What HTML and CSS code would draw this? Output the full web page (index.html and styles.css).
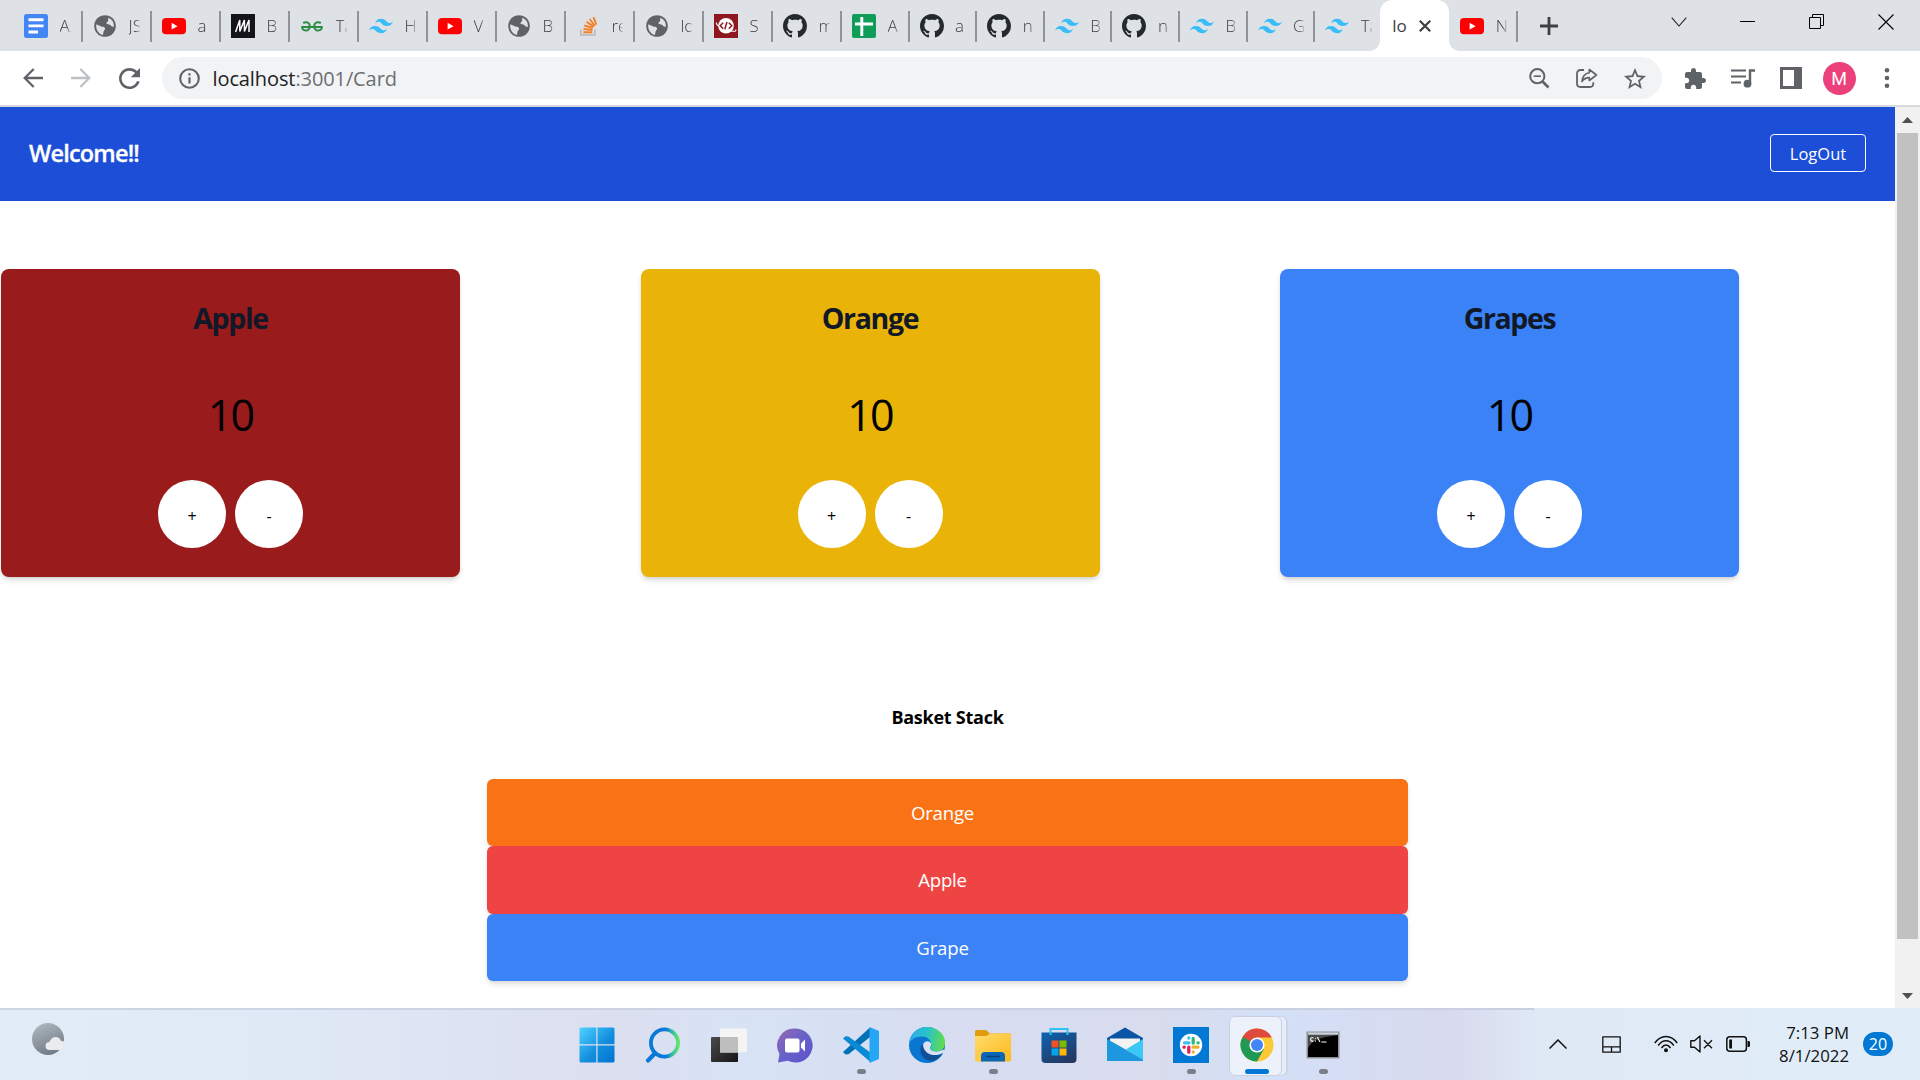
FILE: index.html
```html
<!DOCTYPE html>
<html lang="en">
<head>
<meta charset="utf-8">
<title>localhost:3001/Card</title>
<link rel="stylesheet" href="styles.css">
</head>
<body>
<svg width="0" height="0" class="defs">
  <defs>
    <linearGradient id="g-win" x1="0" y1="0" x2="1" y2="1"><stop offset="0" stop-color="#4fd2ff"/><stop offset=".55" stop-color="#1490df"/><stop offset="1" stop-color="#0072cf"/></linearGradient>
    <linearGradient id="g-search" x1="0" y1="0" x2="1" y2="0"><stop offset=".55" stop-color="#0a78d6"/><stop offset=".75" stop-color="#2fb5b0"/><stop offset="1" stop-color="#5ee66a"/></linearGradient>
    <linearGradient id="g-dark" x1="0" y1="0" x2="1" y2="1"><stop offset="0" stop-color="#4a4a48"/><stop offset="1" stop-color="#161616"/></linearGradient>
    <linearGradient id="g-chat" x1="0" y1="0" x2="1" y2="1"><stop offset="0" stop-color="#9a68ae"/><stop offset=".45" stop-color="#6a63c8"/><stop offset="1" stop-color="#5a50cc"/></linearGradient>
    <linearGradient id="g-edge" x1="0" y1=".3" x2="1" y2=".4"><stop offset="0" stop-color="#2fa9ea"/><stop offset=".5" stop-color="#29c3c8"/><stop offset="1" stop-color="#62dd4a"/></linearGradient>
    <linearGradient id="g-folder" x1="0" y1="0" x2="1" y2="1"><stop offset="0" stop-color="#ffdc70"/><stop offset="1" stop-color="#fcb917"/></linearGradient>
    <linearGradient id="g-store" x1="0" y1="0" x2=".6" y2="1"><stop offset="0" stop-color="#0b64b0"/><stop offset="1" stop-color="#243a66"/></linearGradient>
    <linearGradient id="g-moon" x1="0" y1="0" x2=".4" y2="1"><stop offset="0" stop-color="#b3bcc5"/><stop offset="1" stop-color="#747e88"/></linearGradient>
    <symbol id="docs" viewBox="0 0 24 24"><rect width="24" height="24" rx="2.5" fill="#4285f4"/><path d="M4.500 5.700h15M4.500 11.900h15M4.500 18h9.500" stroke="#fff" stroke-width="2.900"/></symbol>
    <symbol id="globe" viewBox="0 0 24 24"><circle cx="12" cy="12" r="10.800" fill="#5f6368"/><path d="M3.300 10.200l3.900 1.900c1.300.7 3.800.4 4.700 1.900.8 1.500-.8 2.300-1.300 3.400-.4 1-.3 2.400-.7 3.500C5.600 20 2.500 15.500 3.300 10.200zM15.200 3.700c4 1.500 6.200 5 5.600 9.300-1.300-.3-2.600-.5-3.200-1.700-.6-1-2.300-.7-3.500-1.200-1.300-.6-.5-1.900.4-2.400 1.200-.6.500-2.700.7-4z" fill="#dee1e6"/></symbol>
    <symbol id="youtube" viewBox="0 0 24 24"><rect y="4" width="24" height="16.300" rx="4" fill="#f00"/><path d="M9.600 8.800v6.700l6-3.350z" fill="#fff"/></symbol>
    <symbol id="medium" viewBox="0 0 24 24"><rect width="24" height="24" fill="#15141a"/><path d="M4.600 18L8.800 6v11.500L13.400 6v11.500L18 6v12" fill="none" stroke="#fff" stroke-width="1.500" stroke-linejoin="bevel"/></symbol>
    <symbol id="geeks" viewBox="0 0 24 24"><path d="M3.200 9.100C5.700 7.300 9.600 8 9.800 12.200c0 4-3.400 5-5.700 4-1.600-.7-2-2.100-1.900-3.300h19.600c.1 1.200-.3 2.600-1.900 3.300-2.300 1-5.700 0-5.700-4C14.400 8 18.300 7.300 20.800 9.100" fill="none" stroke="#2f8d46" stroke-width="2"/></symbol>
    <symbol id="tailwind" viewBox="0 0 24 24"><path fill="#38bdf8" d="M12 4.800c-3.200 0-5.200 1.600-6 4.800 1.200-1.600 2.600-2.200 4.200-1.800.913.228 1.565.89 2.288 1.624C13.666 10.618 15.027 12 18 12c3.200 0 5.200-1.600 6-4.800-1.200 1.600-2.600 2.200-4.200 1.800-.913-.228-1.565-.89-2.288-1.624C16.337 6.182 14.976 4.800 12 4.800zM6 12c-3.200 0-5.200 1.600-6 4.800 1.200-1.600 2.600-2.200 4.200-1.800.913.228 1.565.89 2.288 1.624C7.666 17.818 9.027 19.200 12 19.200c3.200 0 5.200-1.600 6-4.800-1.200 1.600-2.600 2.200-4.200 1.800-.913-.228-1.565-.89-2.288-1.624C10.337 13.382 8.976 12 6 12z"/></symbol>
    <symbol id="stack" viewBox="0 0 24 24"><path d="M4.800 15.500v5.300h14v-5.300" fill="none" stroke="#bcbbbb" stroke-width="1.700"/><path d="M7.300 18.200h9M7.500 15l8.900 1M8.300 11.500l8.500 2.500M10.400 7.800l7.300 4.800M13.700 5l5.200 7M17.500 3.200l2.800 7.500" stroke="#f48024" stroke-width="1.900"/></symbol>
    <symbol id="school" viewBox="0 0 24 24"><rect width="24" height="24" fill="#8f1820"/><circle cx="12" cy="11.700" r="7.800" fill="#fff"/><path d="M2.600 8.500c-1.500 2 4 5.800 10 7.500s10.500 2 9-.6" fill="none" stroke="#fff" stroke-width="1.100"/><path d="M9.200 8.700l-3 3 3 3M14.800 8.700l3 3-3 3M13 8l-2.200 7.400" fill="none" stroke="#8f1820" stroke-width="1.500"/></symbol>
    <symbol id="github" viewBox="0 0 16 16"><path fill="#24292e" d="M8 0C3.580 0 0 3.580 0 8c0 3.540 2.290 6.530 5.470 7.590.4.070.55-.17.55-.38 0-.19-.01-.82-.01-1.490-2.010.37-2.530-.49-2.690-.94-.09-.23-.48-.94-.82-1.130-.28-.15-.68-.52-.01-.53.63-.01 1.080.58 1.230.82.72 1.210 1.870.87 2.330.66.07-.52.28-.87.51-1.070-1.780-.2-3.640-.89-3.640-3.950 0-.87.31-1.590.82-2.150-.08-.2-.36-1.020.08-2.120 0 0 .67-.21 2.200.82.64-.18 1.320-.27 2-.27s1.360.09 2 .27c1.530-1.040 2.200-.82 2.200-.82.44 1.100.16 1.920.08 2.120.51.56.82 1.270.82 2.150 0 3.070-1.870 3.750-3.650 3.950.29.25.54.73.54 1.480 0 1.070-.01 1.930-.01 2.200 0 .21.15.46.55.38A8.010 8.010 0 0 0 16 8c0-4.420-3.580-8-8-8z"/></symbol>
    <symbol id="sheets" viewBox="0 0 24 24"><rect width="24" height="24" rx="2" fill="#0f9d58"/><path d="M9.800 3v19M3 10h18" stroke="#fff" stroke-width="2.900"/></symbol>
  </defs>
</svg>

<header class="browser">
  <div class="tabstrip">
    <div class="tabs">
      <div class="tab"><svg><use href="#docs"/></svg><span>As</span></div>
      <div class="tab"><svg><use href="#globe"/></svg><span>JS</span></div>
      <div class="tab"><svg><use href="#youtube"/></svg><span>a</span></div>
      <div class="tab"><svg><use href="#medium"/></svg><span>B</span></div>
      <div class="tab"><svg><use href="#geeks"/></svg><span>Ta</span></div>
      <div class="tab"><svg><use href="#tailwind"/></svg><span>H</span></div>
      <div class="tab"><svg><use href="#youtube"/></svg><span>V</span></div>
      <div class="tab"><svg><use href="#globe"/></svg><span>B</span></div>
      <div class="tab"><svg><use href="#stack"/></svg><span>re</span></div>
      <div class="tab"><svg><use href="#globe"/></svg><span>lo</span></div>
      <div class="tab"><svg><use href="#school"/></svg><span>S</span></div>
      <div class="tab"><svg><use href="#github"/></svg><span>m</span></div>
      <div class="tab narrow"><svg><use href="#sheets"/></svg><span>A</span></div>
      <div class="tab narrow"><svg><use href="#github"/></svg><span>a</span></div>
      <div class="tab narrow"><svg><use href="#github"/></svg><span>n</span></div>
      <div class="tab narrow"><svg><use href="#tailwind"/></svg><span>B</span></div>
      <div class="tab narrow"><svg><use href="#github"/></svg><span>n</span></div>
      <div class="tab narrow"><svg><use href="#tailwind"/></svg><span>B</span></div>
      <div class="tab narrow"><svg><use href="#tailwind"/></svg><span>G</span></div>
      <div class="tab last"><svg><use href="#tailwind"/></svg><span>Ta</span></div>
      <div class="tab active"><span>lo</span><svg class="close" viewBox="0 0 12 12"><path d="M.8.8l10.400 10.400M11.200.8L.8 11.200" stroke="#3c4043" stroke-width="2.200"/></svg></div>
      <div class="tab narrow"><svg><use href="#youtube"/></svg><span>N</span></div>
    </div>
    <svg class="plus" viewBox="0 0 18 18"><path d="M9 0v18M0 9h18" stroke="#3c4043" stroke-width="2.800"/></svg>
    <div class="window-buttons">
      <svg width="16" height="10" viewBox="0 0 16 10"><path d="M.7.7L8 9 15.300.7" fill="none" stroke="#222" stroke-width="1.100"/></svg>
      <svg width="15" height="15" viewBox="0 0 15 15"><path d="M0 7.500h15" stroke="#000"/></svg>
      <svg width="16" height="16" viewBox="0 0 16 16"><path d="M.5 3.500h11v11H.5zM3.500 3.500v-3h11v11h-3" fill="none" stroke="#000"/></svg>
      <svg width="16" height="16" viewBox="0 0 16 16"><path d="M.5.5l15 15M15.500.5l-15 15" stroke="#000" stroke-width="1.100"/></svg>
    </div>
  </div>
  <div class="toolbar">
    <div class="tools">
      <svg width="20" height="20" viewBox="0 0 20 20" fill="none" stroke="#5f6368" stroke-width="2.300"><path d="M20 10H2M10.700 1L1.700 10l9 9"/></svg>
      <svg width="20" height="20" viewBox="0 0 20 20" fill="none" stroke="#bdc1c6" stroke-width="2.300"><path d="M0 10h18M9.300 1l9 9-9 9"/></svg>
      <svg width="21" height="21" viewBox="4 4 16 16" fill="#5f6368"><path d="M17.650 6.350C16.200 4.900 14.210 4 12 4c-4.420 0-7.990 3.580-7.990 8s3.570 8 7.990 8c3.730 0 6.840-2.550 7.730-6h-2.080c-.82 2.330-3.040 4-5.650 4-3.310 0-6-2.690-6-6s2.690-6 6-6c1.660 0 3.140.69 4.220 1.780L13 11h7V4l-2.350 2.350z"/></svg>
    </div>
    <div class="omnibox">
      <svg width="21" height="21" viewBox="0 0 21 21"><circle cx="10.500" cy="10.500" r="9.300" fill="none" stroke="#5f6368" stroke-width="2.100"/><path d="M10.500 9.300v6.200M10.500 5.200v2.300" stroke="#5f6368" stroke-width="2.200"/></svg>
      <p class="url">localhost<span>:3001/Card</span></p>
      <div class="tools">
        <svg width="21" height="21" viewBox="0 0 21 21" fill="none" stroke="#5f6368"><circle cx="8.300" cy="8.200" r="7.100" stroke-width="2"/><path d="M13.300 13.300l6.200 6.200" stroke-width="2.700"/><path d="M4.700 8.200h7.200" stroke-width="1.600"/></svg>
        <svg width="22" height="20" viewBox="0 0 22 20" fill="none" stroke="#5f6368" stroke-width="1.800"><path d="M8 2H4.500C2.500 2 1 3.500 1 5.500v10C1 17.500 2.500 19 4.500 19h9.300c2 0 3.500-1.500 3.500-3.500v-1.200"/><path d="M13.300 1.500L20.500 7l-7.200 5.500V9.600C10 9.600 7.800 10.700 6 13.500c.4-4.800 3-8 7.300-8.700z" stroke-linejoin="round" stroke-width="1.600"/></svg>
        <svg width="22" height="21" viewBox="2 2 20 19" fill="#5f6368"><path d="M22 9.240l-7.190-.62L12 2 9.190 8.630 2 9.240l5.460 4.730L5.820 21 12 17.270 18.180 21l-1.630-7.030L22 9.240zM12 15.400l-3.760 2.270 1-4.280-3.320-2.880 4.380-.38L12 6.100l1.710 4.040 4.380.38-3.320 2.880 1 4.280L12 15.400z"/></svg>
      </div>
    </div>
    <div class="tools right">
      <svg width="21" height="21" viewBox="2 1 21 21" fill="#5f6368"><path d="M20.500 11H19V7c0-1.100-.9-2-2-2h-4V3.500C13 2.120 11.880 1 10.500 1S8 2.120 8 3.500V5H4c-1.100 0-1.990.9-1.990 2v3.800H3.500c1.490 0 2.700 1.210 2.700 2.700s-1.210 2.700-2.700 2.700H2V20c0 1.100.9 2 2 2h3.800v-1.500c0-1.490 1.210-2.700 2.700-2.700 1.490 0 2.700 1.210 2.700 2.700V22H17c1.100 0 2-.9 2-2v-4h1.500c1.380 0 2.500-1.120 2.500-2.500S21.880 11 20.500 11z"/></svg>
      <svg width="24" height="20" viewBox="0 0 24 20"><path d="M0 2.500h15M0 8.500h15M0 14.500h10" stroke="#5f6368" stroke-width="2.200"/><path d="M19 15.500V2.500h5" fill="none" stroke="#5f6368" stroke-width="2.400"/><circle cx="16.500" cy="15.700" r="3.900" fill="#5f6368"/></svg>
      <svg width="22" height="22" viewBox="0 0 22 22"><path fill="#5f6368" fill-rule="evenodd" d="M0 0h22v22H0zM3 3v16h11V3z"/></svg>
      <span class="avatar">M</span>
      <svg width="6" height="20" viewBox="0 0 6 20" fill="#5f6368"><circle cx="3" cy="2.300" r="2.300"/><circle cx="3" cy="10" r="2.300"/><circle cx="3" cy="17.700" r="2.300"/></svg>
    </div>
  </div>
</header>

<div class="viewport">
  <main class="page">
    <nav class="navbar">
      <h1>Welcome!!</h1>
      <button class="logout">LogOut</button>
    </nav>
    <section class="cards">
      <article class="card apple">
        <h2>Apple</h2>
        <p class="count">10</p>
        <div class="actions"><button>+</button><button>-</button></div>
      </article>
      <article class="card orange">
        <h2>Orange</h2>
        <p class="count">10</p>
        <div class="actions"><button>+</button><button>-</button></div>
      </article>
      <article class="card grapes">
        <h2>Grapes</h2>
        <p class="count">10</p>
        <div class="actions"><button>+</button><button>-</button></div>
      </article>
    </section>
    <section class="basket">
      <h3>Basket Stack</h3>
      <ul>
        <li class="row-orange">Orange</li>
        <li class="row-apple">Apple</li>
        <li class="row-grape">Grape</li>
      </ul>
    </section>
  </main>
  <div class="scrollbar">
    <svg width="11" height="6" viewBox="0 0 11 6"><path d="M0 6l5.500-6L11 6z" fill="#505050"/></svg>
    <div class="thumb"></div>
    <svg width="11" height="6" viewBox="0 0 11 6"><path d="M0 0l5.500 6L11 0z" fill="#505050"/></svg>
  </div>
</div>

<footer class="taskbar">
  <svg class="weather" width="34" height="32" viewBox="0 0 34 32"><circle cx="16" cy="16" r="16" fill="url(#g-moon)"/><path d="M17.500 27a4 4 0 0 1 0-8c1-3 3-5 6-5s5 2 5.500 4c3 0 5 2 5 4.500S32 27 29.500 27z" fill="#e9ebed"/></svg>
  <div class="apps">
    <div class="app"><svg viewBox="0 0 36 36"><path d="M2 .5h15.300v16.800H.5V2A1.500 1.500 0 0 1 2 .5zM18.500.5H34A1.500 1.500 0 0 1 35.500 2v15.300h-17zM.5 18.500h16.800v17H2A1.500 1.500 0 0 1 .5 34zM18.500 18.500h17V34a1.500 1.500 0 0 1-1.500 1.500H18.500z" fill="url(#g-win)"/></svg></div>
    <div class="app"><svg viewBox="0 0 36 36"><circle cx="19.500" cy="16" r="13.600" fill="none" stroke="url(#g-search)" stroke-width="3.800"/><path d="M9.800 26.500L3 33.500" stroke="#0a78d6" stroke-width="4.200" stroke-linecap="round"/></svg></div>
    <div class="app"><svg viewBox="0 0 36 36"><rect x="0" y="10" width="27" height="25" rx="1" fill="url(#g-dark)"/><rect x="9" y="1.500" width="27" height="24" rx="1" fill="#f4f4f4"/><rect x="9" y="10" width="18" height="15.500" fill="#bebebe"/></svg></div>
    <div class="app"><svg viewBox="0 0 36 36"><path d="M18.500 1.500a17 17 0 1 1-7.500 32.200L1 35.500 2.500 27A17 17 0 0 1 18.500 1.500z" fill="url(#g-chat)"/><rect x="8" y="11.500" width="14.500" height="14" rx="2" fill="#fff"/><path d="M24 16.500l4-4v12l-4-4z" fill="#fff"/></svg></div>
    <div class="app running"><svg viewBox="0 0 36 36"><path d="M0 25l2.500 2.500 3-.3L27 10V.5z" fill="#0071b5"/><path d="M0 11.500l2.500-2.300 3 .2L28 26v9.500z" fill="#0a8ad4"/><path d="M26.500 0L36 4v28l-9.500 4z" fill="#27a6f5"/></svg></div>
    <div class="app"><svg viewBox="0 0 36 36"><circle cx="18" cy="18" r="18" fill="#0b76d1"/><path d="M0 18C0 7 8 0 18 0s18 7 18 15c0 6-4 9.500-8.500 9.500-4 0-6.500-1.500-6.500-3 0-1 1.300-1.500 1.300-4C22.300 13 18 9.500 12.500 9.500 6 9.500 1 13 0 18z" fill="url(#g-edge)"/><path d="M12 19c-1.500 3-1 13 10 15 5 0 9-4 11.500-8-7 3.500-16 2-18.500-7.500-.5-2-2-1-3 .5z" fill="#104f96"/><path d="M14 18.500a4.500 4.500 0 0 1 8-2.500c.8 3-1.800 4-.8 6 1.400 2.700 5 2.700 8 2.300 2-.3 3.500-1 5.300-2L36 27l-2.500-.8c-8 4-18 1.500-19.500-7.700z" fill="#d8e0f3"/><path d="M22 23.500c3 1.300 7 1.300 10-.8L36 14c0 7-4 10.500-8.500 10.500-2.500 0-4.500-.3-5.500-1z" fill="#62dd4a"/></svg></div>
    <div class="app running"><svg viewBox="0 0 36 36"><path d="M0 4.500A1.500 1.500 0 0 1 1.500 3H11l4 3.500h20A1 1 0 0 1 36 7.500V13H0z" fill="#df9c0c"/><path d="M0 9h11.500L15 6.500h21V33a1.500 1.500 0 0 1-1.500 1.500h-33A1.500 1.500 0 0 1 0 33z" fill="url(#g-folder)"/><path d="M6 34.500V29a4 4 0 0 1 4-4h16a4 4 0 0 1 4 4v5.500z" fill="#0b66b8"/><path d="M11 29.500h14" stroke="#0b3f78" stroke-width="1.500"/></svg></div>
    <div class="app"><svg viewBox="0 0 36 36"><path d="M9.500 7V2h17v5" fill="none" stroke="#2ec1f2" stroke-width="2"/><path d="M.5 5.500h35V32a4 4 0 0 1-4 4h-27a4 4 0 0 1-4-4z" fill="url(#g-store)"/><path d="M9.500 5v3M26.500 5v3" stroke="#2ec1f2" stroke-width="2"/><path d="M10.500 13.500h7v7h-7z" fill="#f25022"/><path d="M18.500 13.500h7v7h-7z" fill="#7fba00"/><path d="M10.500 21.500h7v7h-7z" fill="#00a4ef"/><path d="M18.500 21.500h7v7h-7z" fill="#ffb900"/></svg></div>
    <div class="app"><svg viewBox="0 0 36 36"><path d="M0 11L18 .5 36 11v5H0z" fill="#0a56a5"/><path d="M3 11.500h30V24H3z" fill="#f3f3f3"/><path d="M0 12l36 20.500V12L18 23z" fill="#3cc8f6"/><path d="M0 12v22h36v-1.500z" fill="#1d97de"/></svg></div>
    <div class="app running"><svg viewBox="0 0 36 36"><path d="M0 0h36v36H0z" fill="#0078d4"/><circle cx="18" cy="18" r="11.200" fill="#fff"/><g stroke-width="3.300" stroke-linecap="round" fill="none"><path d="M11.500 15.800h4.500M15.800 10.800v.3" stroke="#36c5f0"/><path d="M20.200 11.500V16M25 15.800h.2" stroke="#2eb67d"/><path d="M20 20.200h5M20.200 24.800v.3" stroke="#ecb22e"/><path d="M15.800 20.200v5M11.200 20.200h-.2" stroke="#e01e5a"/></g></svg></div>
    <div class="app running current"><svg viewBox="0 0 36 36"><circle cx="18" cy="18" r="16.500" fill="#fcc934"/><path d="M18 18L3.700 9.700A16.500 16.500 0 0 0 18 34.500L25 22z" fill="#1e9a55"/><path d="M18 10.500h14.700A16.500 16.500 0 0 0 3.700 9.700L11.500 22 18 18z" fill="#de4a3d"/><path d="M4 10l7.500 12 6.500-4z" fill="#1e9a55"/><circle cx="18" cy="18" r="7.600" fill="#fff"/><circle cx="18" cy="18" r="6" fill="#4285f4"/></svg></div>
    <div class="app running"><svg viewBox="0 0 36 36"><path d="M1.500 4.500h33v27h-33z" fill="#8d9196"/><path d="M3 5.500h30v2H3z" fill="#c7d1dc"/><path d="M3 8h30v22H3z" fill="#000"/><path d="M3 8h30c-12 2-25 3-30 13z" fill="#4a4a4a"/><path d="M8.500 10.800H6.700c-.8 0-1 .4-1 1v1.200c0 .7.200 1.100 1 1.100h1.800M10.500 11.200v.9M10.500 13.500v.9M12.300 10l2.700 5M16.500 15h5" stroke="#fff" stroke-width="1.100" fill="none"/></svg></div>
  </div>
  <div class="tray">
    <svg width="18" height="10" viewBox="0 0 18 10"><path d="M.5 9.500L9 1l8.500 8.500" fill="none" stroke="#111" stroke-width="1.500"/></svg>
    <svg class="touchpad" width="19" height="17" viewBox="0 0 19 17"><path d="M.8.800h17.400v15.400H.8zM.8 10.800h17.400M9.500 10.800v5.400" fill="none" stroke="#111" stroke-width="1.300" stroke-linejoin="round"/></svg>
    <svg class="wifi" width="24" height="18" viewBox="0 0 24 18" fill="none" stroke="#111" stroke-width="1.500"><path d="M.8 8C7-.8 17-.8 23.200 8M4.200 10.500c4.500-6.400 11-6.400 15.600 0M7.500 13c2.600-3.900 6.400-3.900 9 0"/><circle cx="12" cy="15.300" r="2" fill="#111" stroke="none"/></svg>
    <svg class="speaker" width="23" height="18" viewBox="0 0 23 18" fill="none" stroke="#111" stroke-width="1.400"><path d="M.8 5.800h3.700L10 1v16l-5.500-4.800H.8zM14 5.200l8 8M22 5.200l-8 8" stroke-linejoin="round"/></svg>
    <svg class="battery" width="24" height="16" viewBox="0 0 24 16"><rect x=".8" y=".8" width="19.600" height="14.400" rx="3" fill="none" stroke="#111" stroke-width="1.500"/><path d="M3.200 3.500h2.800v9H3.200zM21.500 5h1.300q1.200 0 1.200 1.200v3.600q0 1.200-1.200 1.200h-1.300z" fill="#111"/></svg>
    <p class="clock">7:13 PM<br>8/1/2022</p>
    <span class="badge">20</span>
  </div>
</footer>
</body>
</html>
```
FILE: styles.css
```css
* {
  box-sizing: border-box;
  margin: 0;
  padding: 0;
}

body {
  display: flex;
  flex-direction: column;
  width: 1920px;
  height: 1080px;
  overflow: hidden;
  background: #fff;
  color: #000;
  font-family: "Open Sans", "Noto Sans", sans-serif;
}

svg {
  display: block;
  flex: none;
}

.defs {
  position: absolute;
}

button {
  border: 0;
  font: inherit;
}

/* Browser window */
.browser {
  flex: none;
  height: 107px;
  border-bottom: 2px solid #d8d9dc;
}

.tabstrip {
  display: flex;
  height: 51px;
  padding-left: 13px;
  background: #dee1e6;
}

.tabs {
  display: flex;
}

.tab {
  display: flex;
  align-items: center;
  position: relative;
  width: 69px;
  height: 51px;
  padding-left: 11px;
  font-size: 17px;
  color: #3c4043;
}

.tab.narrow {
  width: 67.6px;
}

.tab.last {
  width: 66px;
}

.tab::after {
  content: "";
  position: absolute;
  right: -1px;
  top: 11px;
  width: 2px;
  height: 31px;
  background: #90949a;
}

.tab.last::after {
  display: none;
}

.tab svg {
  width: 24px;
  height: 24px;
}

.tab span {
  width: 11px;
  margin-left: 11.5px;
  overflow: hidden;
  white-space: nowrap;
  font-weight: 350;
  -webkit-mask-image: linear-gradient(90deg, #000 60%, rgba(0, 0, 0, 0.2));
  mask-image: linear-gradient(90deg, #000 60%, rgba(0, 0, 0, 0.2));
}

.tab.active {
  padding-left: 12px;
  border-radius: 12px 12px 0 0;
  background: #fff;
}

.tab.active::before,
.tab.active::after {
  content: "";
  display: block;
  position: absolute;
  top: 41px;
  width: 10px;
  height: 10px;
}

.tab.active::before {
  left: -10px;
  background: radial-gradient(circle at 0 0, #dee1e6 9.5px, #fff 10px);
}

.tab.active::after {
  right: -10px;
  background: radial-gradient(circle at 100% 0, #dee1e6 9.5px, #fff 10px);
}

.tab.active span {
  width: 17px;
  margin-left: 0;
  font-weight: 400;
  -webkit-mask-image: none;
  mask-image: none;
}

.tab .close {
  width: 12px;
  height: 12px;
  margin-left: 10px;
}

.plus {
  width: 18px;
  height: 18px;
  margin: 17px 0 0 23px;
}

.window-buttons {
  display: grid;
  grid-template-columns: repeat(4, 69px);
  place-items: center;
  height: 43px;
  margin-left: auto;
}

.toolbar {
  display: flex;
  align-items: center;
  height: 54px;
  padding: 0 9px;
}

.tools {
  display: grid;
  grid-auto-flow: column;
  grid-auto-columns: 48px;
  place-items: center;
}

.omnibox {
  display: flex;
  align-items: center;
  flex: 1;
  height: 42px;
  margin: 0 9px;
  padding: 0 3px 0 17px;
  border-radius: 21px;
  background: #f1f3f4;
}

.url {
  margin: 0 auto 0 12.5px;
  padding-top: 2px;
  font-size: 20px;
  line-height: 28px;
  letter-spacing: -0.1px;
  color: #202124;
}

.url span {
  color: #6b6f73;
}

.avatar {
  width: 33px;
  height: 33px;
  border-radius: 50%;
  background: #ec407a;
  color: #fff;
  font: 18px/34px Roboto, sans-serif;
  text-align: center;
}

/* Page */
.viewport {
  display: flex;
  flex: none;
  height: 901px;
}

.page {
  flex: 1;
}

.navbar {
  display: flex;
  align-items: center;
  justify-content: space-between;
  height: 94px;
  padding: 0 29px;
  background: #1d4ed8;
  color: #fff;
}

.navbar h1 {
  margin-bottom: 2px;
  font-size: 23.5px;
  font-weight: 600;
  line-height: 32px;
  letter-spacing: -0.8px;
  -webkit-text-stroke: 0.3px #fff;
}

.logout {
  width: 96px;
  height: 38px;
  margin-bottom: 2px;
  border: 1px solid #fff;
  border-radius: 4px;
  background: none;
  color: #fff;
  font-size: 16.5px;
}

.cards {
  display: grid;
  grid-template-columns: repeat(3, 459px);
  column-gap: 180.5px;
  padding: 68px 0 0 1px;
}

.card {
  height: 308px;
  padding-top: 31px;
  border-radius: 8px;
  box-shadow: 0 4px 6px -1px rgba(0, 0, 0, 0.14), 0 2px 4px -2px rgba(0, 0, 0, 0.12);
  text-align: center;
}

.apple { background: #991b1b; }
.orange { background: #eab308; }
.grapes { background: #3b82f6; }

.card h2 {
  font-size: 28.5px;
  line-height: 36px;
  letter-spacing: -1.35px;
  color: #111827;
}

.count {
  margin: 49px 0 35px;
  font-size: 43px;
  line-height: 60px;
  letter-spacing: -1.8px;
}

.actions {
  display: flex;
  justify-content: center;
  gap: 9px;
}

.actions button {
  width: 68px;
  height: 68px;
  padding-top: 3px;
  border-radius: 50%;
  background: #fff;
  color: #000;
  font-size: 16px;
}

.basket {
  width: 921px;
  margin: 126px auto 0;
  text-align: center;
}

.basket h3 {
  margin-bottom: 48px;
  font-size: 18px;
  line-height: 28px;
  letter-spacing: -0.25px;
}

.basket ul {
  list-style: none;
}

.basket li {
  height: 67.4px;
  padding-right: 10px;
  border-radius: 6px;
  box-shadow: 0 4px 6px -1px rgba(0, 0, 0, 0.12), 0 2px 4px -2px rgba(0, 0, 0, 0.1);
  color: #fff;
  font-size: 18.6px;
  line-height: 68px;
  letter-spacing: -0.2px;
}

.row-orange { background: #f97316; }
.row-apple { background: #ef4444; }
.row-grape { background: #3b82f6; }

.scrollbar {
  display: flex;
  flex-direction: column;
  align-items: center;
  width: 25px;
  padding: 10px 0 9px;
  background: #f1f1f1;
}

.scrollbar .thumb {
  width: 21px;
  height: 806px;
  margin: 10px 0 auto;
  background: #c1c1c1;
}

/* Desktop taskbar */
.taskbar {
  display: grid;
  grid-template-columns: 564.4px 792px 1fr;
  flex: none;
  height: 72px;
  background:
    linear-gradient(90deg, #cdd6e4, #c9cfe2 1534px, transparent 1534px) 0 0 / 100% 2px no-repeat,
    linear-gradient(90deg, #e1ecf7 0, #e0eaf6 240px, #dcdff0 610px, #d7e3f5 740px, #d8dcf1 1000px, #d8dced 1160px, #d3e0f7 1270px, #d8daee 1450px, #dfe9f6 1540px, #e0edf8 1920px);
}

.weather {
  margin: 15px 0 0 32px;
}

.apps {
  display: grid;
  grid-template-columns: repeat(12, 66px);
}

.app {
  position: relative;
  display: flex;
  justify-content: center;
  padding-top: 19px;
}

.app svg {
  position: relative;
  width: 36px;
  height: 36px;
}

.app.running::after {
  content: "";
  position: absolute;
  left: 29px;
  top: 61px;
  width: 9px;
  height: 5px;
  border-radius: 2.5px;
  background: #7b7f89;
}

.app.current::before {
  content: "";
  position: absolute;
  left: 5px;
  top: 8px;
  width: 51px;
  height: 58px;
  border: 1px solid #c9d0e4;
  border-radius: 6px;
  background: #edf1fb;
  box-shadow: 5px 0 0 -1px #e8edf9, 6px 0 0 0 #ccd4e8;
}

.app.current::after {
  left: 21px;
  width: 24px;
  background: #0078d4;
}

.tray {
  display: flex;
  align-items: center;
  justify-content: flex-end;
  padding-right: 27px;
}

.touchpad { margin-left: 35px; }
.wifi { margin-left: 33px; }
.speaker { margin-left: 12px; }
.battery { margin-left: 13px; }

.clock {
  width: 99px;
  font-size: 16.8px;
  line-height: 23px;
  text-align: right;
  color: #111;
}

.badge {
  width: 30px;
  height: 24px;
  margin-left: 14px;
  border-radius: 12px;
  background: #0078d4;
  color: #fff;
  font-size: 16px;
  line-height: 24px;
  text-align: center;
}
```
